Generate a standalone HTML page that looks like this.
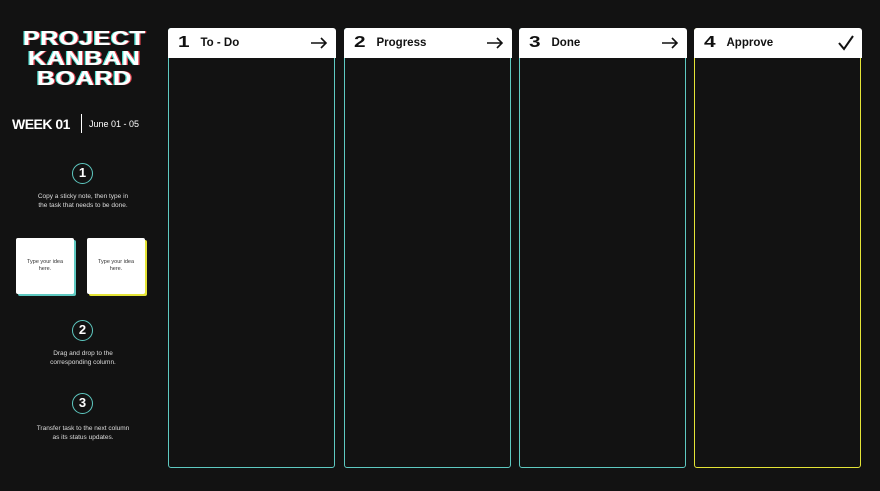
<!DOCTYPE html>
<html><head><style>
*{margin:0;padding:0;box-sizing:border-box}
body{width:880px;height:491px;background:#121212;font-family:"Liberation Sans",sans-serif;color:#fff;position:relative;overflow:hidden}
.abs{position:absolute}
.title{left:0;width:168px;top:29px;text-align:center;font-weight:900;font-size:20px;line-height:20px;letter-spacing:0.3px;text-shadow:-1px 0 #4de0d6,1px 0 #e0404a}
.title span{display:inline-block;transform:scaleX(1.27)}
.col{position:absolute;top:28px;width:167px;height:440px;border:1.5px solid #5ec9c1;border-radius:3px}
.col.y{border-color:#e4e436}
.hd{position:absolute;left:-1.5px;top:-1.5px;right:-1.5px;height:30px;background:#fff;border-radius:3px 3px 0 0;color:#111;font-weight:bold;font-size:11.5px;display:flex;align-items:center;padding:0 8px 0 10px}
.num{font-weight:900;font-size:16px;width:23px;display:inline-block;transform:scaleX(1.3);transform-origin:left}
.hd .t{flex:1}
.circ{width:21px;height:21px;border:1.5px solid #5ec9c1;border-radius:50%;font-weight:900;font-size:13px;text-align:center;line-height:18px;left:72px}
.desc{left:32px;width:102px;text-align:center;font-size:6.5px;line-height:9px;color:#ddd}
.note{top:238px;width:58px;height:56px;background:#fff;color:#333;font-size:5.5px;text-align:center;padding:21px 8px 0;line-height:7px;border-radius:2px}
</style></head><body>
<div class="abs title"><span>PROJECT</span><br><span>KANBAN</span><br><span>BOARD</span></div>
<div class="abs" style="left:12px;top:116px;font-weight:bold;font-size:14px;letter-spacing:-0.5px">WEEK 01</div>
<div class="abs" style="left:81px;top:114px;width:1px;height:19px;background:#fff"></div>
<div class="abs" style="left:89px;top:119px;font-size:9px">June 01 - 05</div>
<div class="abs circ" style="top:163px">1</div>
<div class="abs desc" style="top:192px;left:37px;width:92px">Copy a sticky note, then type in the task that needs to be done.</div>
<div class="abs note" style="left:16px;box-shadow:2px 2px 0 #5ec9c1">Type your idea here.</div>
<div class="abs note" style="left:87px;box-shadow:2px 2px 0 #e4e436">Type your idea here.</div>
<div class="abs circ" style="top:320px">2</div>
<div class="abs desc" style="top:349px;left:38px;width:90px">Drag and drop to the corresponding column.</div>
<div class="abs circ" style="top:393px">3</div>
<div class="abs desc" style="top:424px;left:36px;width:94px">Transfer task to the next column as its status updates.</div>

<div class="col" style="left:168px"><div class="hd"><span class="num">1</span><span class="t">To - Do</span><svg width="18" height="12" viewBox="0 0 18 12"><path d="M1 6H16M11 1L16 6L11 11" fill="none" stroke="#111" stroke-width="1.6"/></svg></div></div>
<div class="col" style="left:344px"><div class="hd"><span class="num">2</span><span class="t">Progress</span><svg width="18" height="12" viewBox="0 0 18 12"><path d="M1 6H16M11 1L16 6L11 11" fill="none" stroke="#111" stroke-width="1.6"/></svg></div></div>
<div class="col" style="left:519px"><div class="hd"><span class="num">3</span><span class="t">Done</span><svg width="18" height="12" viewBox="0 0 18 12"><path d="M1 6H16M11 1L16 6L11 11" fill="none" stroke="#111" stroke-width="1.6"/></svg></div></div>
<div class="col y" style="left:694px"><div class="hd"><span class="num">4</span><span class="t">Approve</span>
<svg width="16" height="16" viewBox="0 0 16 16"><path d="M1 8 L6 14 L15 1" fill="none" stroke="#111" stroke-width="2"/></svg></div></div>
</body></html>
